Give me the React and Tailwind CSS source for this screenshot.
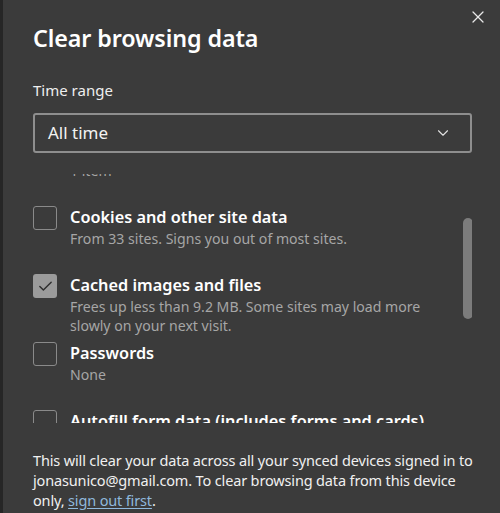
import { Check, ChevronDown, X } from "lucide-react";

const ITEMS = [
  { title: "Browsing history", sub: ["1 item"], checked: false },
  { title: "Cookies and other site data", sub: ["From 33 sites. Signs you out of most sites."], checked: false },
  {
    title: "Cached images and files",
    sub: ["Frees up less than 9.2 MB. Some sites may load more", "slowly on your next visit."],
    checked: true,
  },
  { title: "Passwords", sub: ["None"], checked: false },
  { title: "Autofill form data (includes forms and cards)", sub: ["None"], checked: false },
];

function Checkbox({ checked }) {
  if (checked) {
    return (
      <div className="w-6 h-6 shrink-0 rounded-[3px] bg-[#9b9b9b] flex items-center justify-center">
        <Check size={17} strokeWidth={2} className="text-[#2e2e2e]" />
      </div>
    );
  }
  return <div className="w-6 h-6 shrink-0 rounded-[3px] border border-[#8a8a8a]" />;
}

export default function App() {
  return (
    <div
      className="w-[500px] h-[513px] flex bg-[#232323] overflow-hidden"
      style={{ fontFamily: '"Noto Sans", "Open Sans", sans-serif' }}
    >
      <div className="w-[3px] shrink-0 bg-[#262626]" />

      <div className="relative flex-1 bg-[#3b3b3b] flex flex-col pl-[30px] pr-[28px]">
        <button className="absolute top-[7px] right-[12px] text-[#e8e8e8]">
          <X size={20} strokeWidth={1.5} />
        </button>

        <h1 className="mt-[22px] text-[23.3px] leading-[32px] font-semibold text-white tracking-[-0.1px]">
          Clear browsing data
        </h1>

        <p className="mt-[26px] text-[15px] leading-[20px] text-[#eeeeee]">Time range</p>

        {/* TIME RANGE */}
        <div className="mt-[13px] h-[40px] border-2 border-[#8e8e8e] rounded-[3px] flex items-center justify-between pl-[13px] pr-[18px]">
          <span className="text-[17px] text-[#f2f2f2]">All time</span>
          <ChevronDown size={18} strokeWidth={1.5} className="text-[#e0e0e0]" />
        </div>

        {/* CHECKBOX LIST */}
        <div className="relative mt-[21px] h-[249px] overflow-hidden">
          <div className="-mt-[36px]">
            {ITEMS.map((item) => (
              <div key={item.title} className="h-[68px] flex gap-[13px]">
                <Checkbox checked={item.checked} />
                <div className="-mt-[1px]">
                  <p className="text-[16.3px] leading-[24px] font-semibold text-white whitespace-nowrap">
                    {item.title}
                  </p>
                  {item.sub.map((line) => (
                    <p key={line} className="text-[14.1px] leading-[19px] text-[#a6a6a6] whitespace-nowrap">
                      {line}
                    </p>
                  ))}
                </div>
              </div>
            ))}
          </div>

          <div className="absolute right-[-1px] top-[44px] w-[10px] h-[101px] rounded-full bg-[#7c7c7c]" />
        </div>

        {/* FOOTER */}
        <p className="mt-[27px] -mr-[10px] text-[14.5px] leading-[20px] tracking-[-0.15px] text-[#f0f0f0]">
          This will clear your data across all your synced devices signed in to jonasunico@gmail.com. To clear
          browsing data from this device only,{" "}
          <a href="#" className="text-[#8fb8dc] underline underline-offset-2">
            sign out first
          </a>
          .
        </p>
      </div>
    </div>
  );
}
